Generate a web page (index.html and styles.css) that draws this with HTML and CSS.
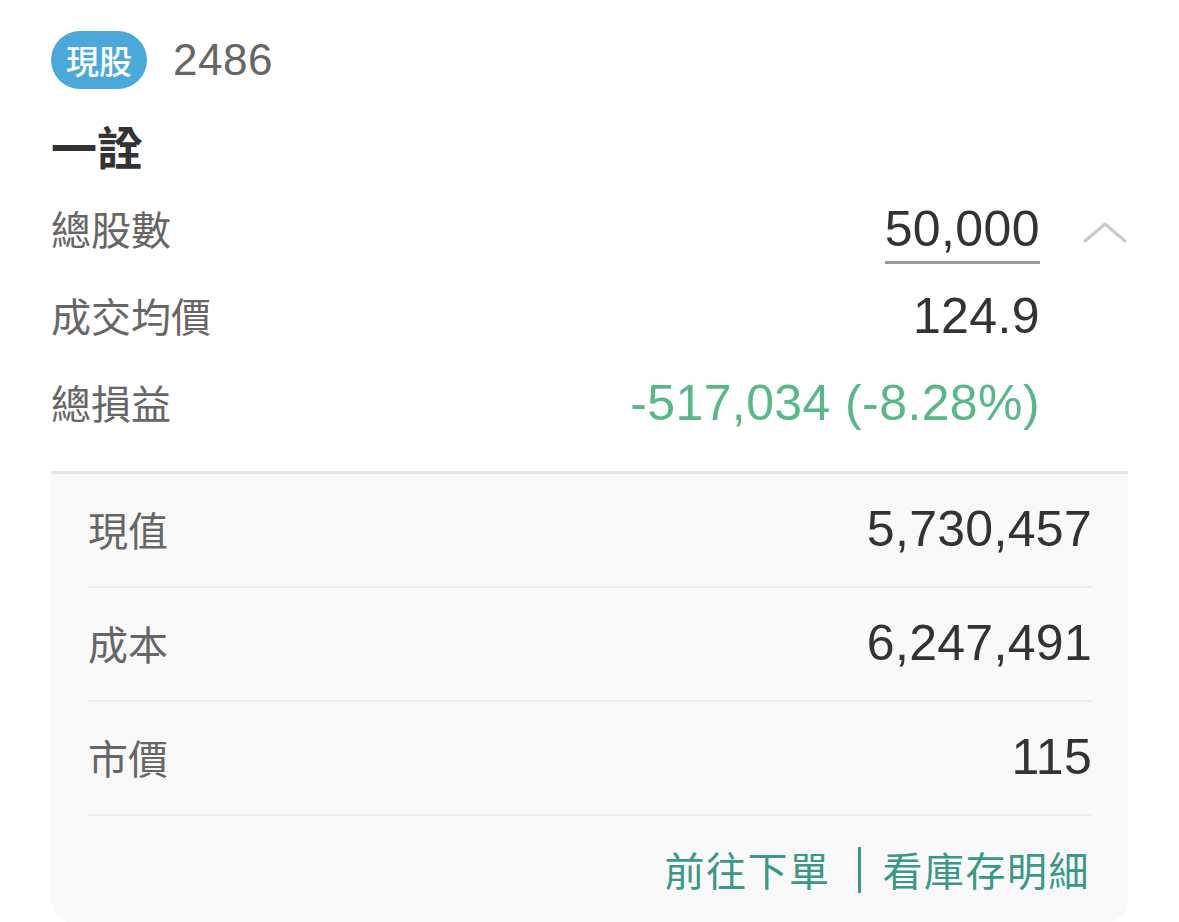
FILE: index.html
```
<!DOCTYPE html>
<html lang="zh-Hant">
<head>
<meta charset="utf-8">
<title>一詮 2486</title>
<link rel="stylesheet" href="styles.css">
</head>
<body>
<div class="card">
  <div class="head">
    <span class="badge">現股</span>
    <span class="code">2486</span>
  </div>
  <div class="name">一詮</div>
  <div class="summary">
    <div class="srow">
      <span class="label">總股數</span>
      <span class="value"><span class="underline">50,000</span></span>
      <span class="icon">
        <svg width="46" height="26" viewBox="0 0 46 26"><polyline points="3,22 23,5 43,22" fill="none" stroke="#c9c9c9" stroke-width="3" stroke-linecap="round" stroke-linejoin="round"/></svg>
      </span>
    </div>
    <div class="srow">
      <span class="label">成交均價</span>
      <span class="value">124.9</span>
      <span class="icon"></span>
    </div>
    <div class="srow">
      <span class="label">總損益</span>
      <span class="value green">-517,034 (-8.28%)</span>
      <span class="icon"></span>
    </div>
  </div>
  <div class="panel">
    <div class="prow"><span class="plabel">現值</span><span class="pvalue">5,730,457</span></div>
    <div class="prow"><span class="plabel">成本</span><span class="pvalue">6,247,491</span></div>
    <div class="prow"><span class="plabel">市價</span><span class="pvalue">115</span></div>
    <div class="links">
      <a class="link">前往下單</a>
      <span class="sep"></span>
      <a class="link">看庫存明細</a>
    </div>
  </div>
</div>
</body>
</html>
```
FILE: styles.css
```
html, body {
  margin: 0;
  padding: 0;
  background: #ffffff;
}
body {
  font-family: "Liberation Sans", "Noto Sans CJK TC", sans-serif;
  color: #333333;
  overflow: hidden;
}
.card {
  padding: 31px 51px 0 51px;
}
.head {
  display: flex;
  align-items: center;
  height: 58px;
}
.badge {
  display: inline-flex;
  align-items: center;
  justify-content: center;
  width: 96px;
  height: 58px;
  border-radius: 29px;
  background: #4ba9d9;
  color: #ffffff;
  font-family: "Noto Sans CJK TC", sans-serif;
  font-size: 33px;
  font-weight: 500;
}
.code {
  margin-left: 26px;
  font-size: 44px;
  color: #666666;
  letter-spacing: 0.5px;
}
.name {
  margin-top: 28px;
  height: 56px;
  line-height: 56px;
  font-family: "Noto Sans CJK TC", sans-serif;
  font-size: 46px;
  font-weight: 700;
  color: #333333;
}
.summary {
  margin-top: 14px;
}
.srow {
  display: flex;
  align-items: center;
  height: 87px;
}
.label {
  flex: 1;
  font-family: "Noto Sans CJK TC", sans-serif;
  font-size: 40px;
  color: #666666;
  margin-top: -5px;
}
.value {
  font-size: 50px;
  color: #333333;
  line-height: 56px;
  letter-spacing: 0.4px;
  margin-top: -3px;
}
.underline {
  display: inline-block;
  padding-bottom: 4px;
  border-bottom: 3px solid #9a9a9a;
  margin-bottom: -7px;
  line-height: 56px;
}
.green {
  color: #59b789;
}
.icon {
  width: 88px;
  display: flex;
  justify-content: flex-end;
  padding-top: 2px;
}
.panel {
  margin-top: 23px;
  background: #f9f9f9;
  border-top: 3px solid #e4e4e4;
  border-radius: 0 0 24px 24px;
  padding: 0 36px 0 37px;
}
.prow {
  display: flex;
  align-items: center;
  justify-content: space-between;
  height: 112px;
  border-bottom: 2px solid #ececec;
}
.plabel {
  font-family: "Noto Sans CJK TC", sans-serif;
  font-size: 40px;
  color: #666666;
  margin-top: -2px;
}
.pvalue {
  font-size: 50px;
  color: #333333;
  letter-spacing: 0.3px;
  margin-top: -2px;
}
.links {
  display: flex;
  align-items: center;
  justify-content: flex-end;
  height: 107px;
  padding-right: 2px;
}
.link {
  font-family: "Noto Sans CJK TC", sans-serif;
  font-size: 40px;
  color: #3c9886;
  letter-spacing: 1.5px;
  margin-top: -2px;
}
.sep {
  width: 3px;
  height: 46px;
  background: #3c9886;
  margin: 0 22px 0 27px;
}
```
